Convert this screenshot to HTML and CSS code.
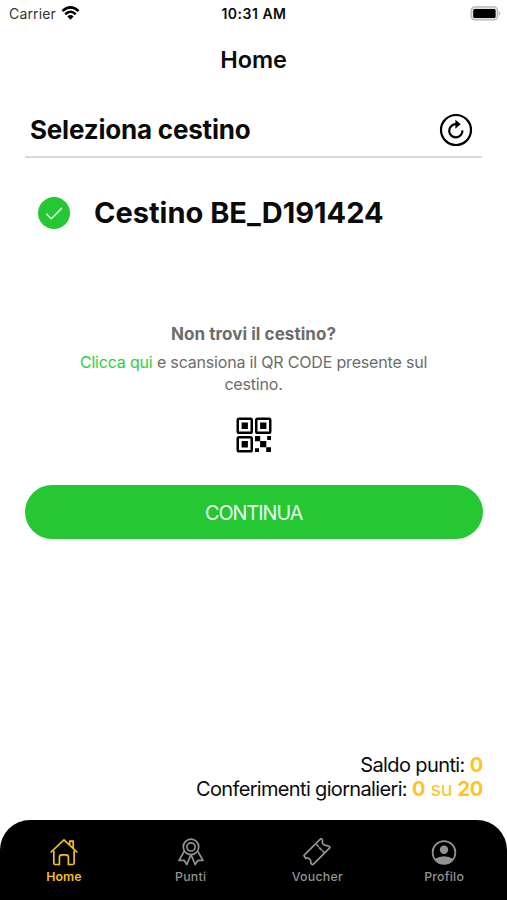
FILE: index.html
```html
<!DOCTYPE html>
<html lang="it">
<head>
<meta charset="utf-8">
<meta name="viewport" content="width=device-width, initial-scale=1">
<title>Home</title>
<link rel="stylesheet" href="styles.css">
</head>
<body>
<div class="screen">
  <div class="status">
    <div class="carrier"><span class="carrier-name">Carrier</span>
      <svg class="wifi" viewBox="0 0 18 14" width="19" height="14"><g fill="none" stroke="#000" stroke-width="2.6"><path d="M.9 5.1Q9-2.3 17.1 5.1"/><path d="M3.7 8.2Q9 3.3 14.3 8.2"/></g><path d="M5.9 10.4Q9 7.7 12.1 10.4L9 13.7Z"/></svg>
    </div>
    <time class="clock">10:31 AM</time>
    <svg class="battery" viewBox="0 0 32 15" width="32" height="15"><rect x="1.1" y=".9" width="26.6" height="13" rx="3.8" fill="#e2e2e2" stroke="#b4b4b4" stroke-width="1.2"/><rect x="3.2" y="2.9" width="22.4" height="9" rx="1.5"/><path d="M29 5.2Q31.4 7.4 29 9.6Z" fill="#aaa"/></svg>
  </div>
  <header class="title"><h1>Home</h1></header>
  <main class="content">
    <div class="section-head">
      <h2>Seleziona cestino</h2>
      <svg class="refresh" viewBox="0 0 34 34" width="34" height="34"><g fill="none" stroke="#000"><circle cx="17" cy="17" r="15" stroke-width="2.2"/><path d="M23.4 17.4a6.6 6.6 0 1 1-6.6-6.2h2.2" stroke-width="2.2"/></g><path d="M16.4 6.7 21.7 11.2 16.4 15.7Z"/></svg>
    </div>
    <div class="bin">
      <svg viewBox="0 0 34 34" width="34" height="34"><circle cx="17" cy="17" r="16" fill="#25c732"/><path d="m9.3 17.8 5.1 4.9L24.9 11.9" fill="none" stroke="#e6ffe8" stroke-width="1.5"/></svg>
      <span class="bin-name">Cestino BE_D191424</span>
    </div>
    <section class="help">
      <h3>Non trovi il cestino?</h3>
      <p><span class="line"><a>Clicca qui</a> e scansiona il QR CODE presente sul</span> <span class="line last">cestino.</span></p>
      <svg class="qr" viewBox="0 0 36 36" width="36" height="36"><g fill="none" stroke="#000" stroke-width="2.5"><rect x="1.75" y="1.75" width="14" height="14" rx="1.3"/><rect x="20.25" y="1.75" width="14" height="14" rx="1.3"/><rect x="1.75" y="20.25" width="14" height="14" rx="1.3"/></g><path d="M5.6 5.6h6.3v6.3H5.6zM24.1 5.6h6.3v6.3h-6.3zM5.6 24.1h6.3v6.3H5.6zM19 19h5.2v5.2H19zM24.1 24.1h6.2v6.2h-6.2zM31.2 19H35v4h-3.8zM19 31.2h4V35h-4zM30.2 30.2H35V35h-4.8z"/></svg>
    </section>
    <button class="continue" type="button"><span>CONTINUA</span></button>
    <div class="balance">
      <p class="points">Saldo punti: <em><b>0</b></em></p>
      <p class="daily">Conferimenti giornalieri: <em><b>0</b> su <b>20</b></em></p>
    </div>
  </main>
  <nav class="tabs">
    <a class="tab active">
      <svg viewBox="0 0 30 30" width="30" height="30"><path d="M4.8 14.3V26q0 1.5 1.5 1.5h4.1V20.4q0-2.6 2.5-2.6h4q2.5 0 2.5 2.6v7.1h4.2q1.5 0 1.5-1.5V14.3M2.1 15 15 2.8 27.9 15M20.7 7.8V4.2h3.5v7"/></svg>
      <span class="home-label">Home</span>
    </a>
    <a class="tab">
      <svg viewBox="0 0 30 30" width="30" height="30"><circle cx="15" cy="9.9" r="7.7"/><circle cx="15" cy="9.9" r="4.1"/><path d="M8.2 14.4 3 23.5l5-.2 2.8 4.2 4.2-9.8 4.2 9.8 2.8-4.2 5 .2-5.2-9.1"/></svg>
      <span class="points-label">Punti</span>
    </a>
    <a class="tab">
      <svg viewBox="0 0 30 30" width="30" height="30"><path d="M2.4 17.8 18.3 2.1q.8-.7 1.5 0l.7 1.2c-.7 3.2 1.3 5.5 4.7 5.2l1.9.9q1.5.7.4 1.8L11.5 27.2q-.9.8-1.8 0l-.9-1.3c.5-3.2-1.7-5.2-4.8-4.6l-1.5-1.6q-.9-.9-.1-1.9Z"/><path d="m14.9 7.8 1.3 1.5m1.3 1.5 2 2m1.4 1.4 1.4 1.2"/></svg>
      <span class="voucher-label">Voucher</span>
    </a>
    <a class="tab">
      <svg viewBox="0 0 30 30" width="30" height="30"><circle cx="15" cy="15.5" r="11.4"/><circle class="solid" cx="15" cy="12.7" r="4.2"/><path class="solid" d="M6.2 21.8Q10 19.2 15 19.2t8.8 2.6q-3.4 5-8.8 5t-8.8-5Z"/></svg>
      <span class="profile-label">Profilo</span>
    </a>
  </nav>
</div>
</body>
</html>
```
FILE: styles.css
```css
* { box-sizing: border-box; }
body { margin: 0; background: #fff; color: #0b0b0b; font-family: Inter, "Liberation Sans", sans-serif; }
h1, h2, h3, p { margin: 0; }
svg { display: block; flex: none; }
.screen { width: 507px; height: 900px; display: flex; flex-direction: column; overflow: hidden; }

.status { height: 28px; display: grid; grid-template-columns: 1fr auto 1fr; align-items: center; padding: 0 5px 0 9px; }
.carrier { display: flex; align-items: center; gap: 5px; font-size: 14px; color: #333; letter-spacing: 0.15px; }
.wifi { margin-top: -2px; }
.clock { font-size: 14px; font-weight: 600; letter-spacing: 0.5px; margin: -1px 3px 0 0; }
.carrier-name { margin-top: -1px; }
.battery { justify-self: end; margin-top: -2px; }

.title { height: 63px; text-align: center; }
.title h1 { font-size: 23.5px; line-height: 63px; font-weight: 600; letter-spacing: -0.1px; }

.content { flex: 1; display: flex; flex-direction: column; padding: 0 25px; }
.section-head { height: 66.5px; padding: 13px 9px 0 5.5px; display: flex; align-items: center; justify-content: space-between; }
.section-head { height: 67px; padding: 12px 9px 0 5px; border-bottom: 2px solid #dadada; }
.section-head h2 { font-size: 26px; line-height: 34px; font-weight: 700; letter-spacing: -0.2px; }
.bin { height: 34px; margin: 38px 0 0 11.5px; display: flex; align-items: center; gap: 23.5px; }
.bin-name { font-size: 29px; font-weight: 700; line-height: 34px; white-space: nowrap; letter-spacing: 0; }

.help { margin-top: 92px; display: flex; flex-direction: column; align-items: center; text-align: center; color: #6c6c6c; }
.help h3 { font-size: 17px; line-height: 24px; font-weight: 700; letter-spacing: 0.05px; }
.help p { margin-top: 5px; font-size: 16px; line-height: 22px; white-space: nowrap; letter-spacing: -0.18px; }
.line { display: block; }
.help a { color: #2ed13b; }
.qr { margin-top: 22px; }

.continue { height: 54px; margin: 32px -0.5px 0 0; padding-top: 3px; border: 0; border-radius: 27px; background: #25c732; color: #effff0; font: 400 19.8px Inter, sans-serif; letter-spacing: -1px; }
.balance { margin: auto -1px 19px 0; text-align: right; font-size: 20px; line-height: 24px; letter-spacing: -0.66px; white-space: nowrap; }
.points { letter-spacing: -0.6px; }
.balance em { font-style: normal; color: #fdc51d; letter-spacing: -0.3px; }

.tabs { height: 80px; display: grid; grid-template-columns: repeat(4, 1fr); background: #000; border-radius: 30px 30px 0 0; color: #939393; font-size: 12.3px; font-weight: 500; }
.tab { display: flex; flex-direction: column; align-items: center; padding: 17px 0 0 1px; }
.tab span { line-height: 15px; margin-top: 2px; letter-spacing: 0.25px; }
.tab svg { fill: none; stroke: currentColor; stroke-width: 1.7; stroke-linejoin: round; stroke-linecap: round; }
.tab .solid { fill: currentColor; stroke: none; }
.active { color: #f5c116; }
.active span { font-weight: 600; letter-spacing: 0.1px; }
```
